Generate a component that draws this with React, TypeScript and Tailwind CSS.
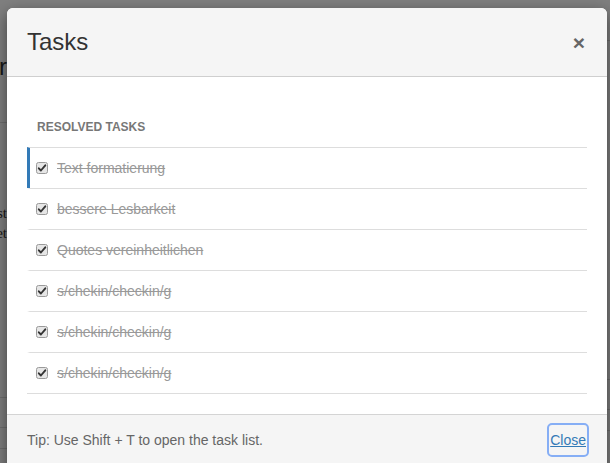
const tasks = [
  "Text formatierung",
  "bessere Lesbarkeit",
  "Quotes vereinheitlichen",
  "s/chekin/checkin/g",
  "s/chekin/checkin/g",
  "s/chekin/checkin/g",
];

function CheckedBox() {
  return (
    <svg width="12" height="12" viewBox="0 0 12 12" className="shrink-0">
      <rect x="0.5" y="0.5" width="11" height="11" rx="2" fill="#e6e6e6" stroke="#9a9a9a" />
      <path d="M2.8 6.3 L4.9 8.5 L9.3 3.3" fill="none" stroke="#333" strokeWidth="1.9" strokeLinecap="round" strokeLinejoin="round" />
    </svg>
  );
}

export default function App() {
  return (
    <div className="relative h-[463px] w-[610px] overflow-hidden bg-white font-['Liberation_Sans',Arial,sans-serif] text-[#333]">
      {/* page behind the dialog */}
      <div className="flex h-full">
        <div className="w-[7px] shrink-0 overflow-hidden">
          <div className="flex h-[123px] justify-end border-b border-[#ddd] pt-[52px]">
            <span className="whitespace-nowrap text-[24px] leading-[30px]">Tasker</span>
          </div>
          <div className="flex flex-col items-end pt-[80px] font-['Liberation_Serif',serif] text-[15px] leading-[20px]">
            <span className="whitespace-nowrap">ist</span>
            <span className="whitespace-nowrap">tet</span>
          </div>
          <div className="mt-[125px] h-[30px] border-b border-[#ddd]" />
          <div className="h-[30px] border-b border-[#ddd]" />
          <div className="h-[21px] border-b border-[#ddd]" />
        </div>
        <div className="flex-1" />
        <div className="w-[3px] shrink-0">
          <div className="h-[41px] border-b border-[#ddd]" />
          <div className="h-[339px] border-b border-[#ddd]" />
          <div className="h-[30px] border-b border-[#ddd]" />
          <div className="h-[21px] border-b border-[#ddd]" />
        </div>
      </div>

      {/* overlay + dialog */}
      <div className="absolute inset-0 bg-black/50 pl-[7px] pt-[8px]">
        <div className="w-[600px] overflow-hidden rounded-t-[6px] bg-white shadow-[0_5px_15px_rgba(0,0,0,0.5)]">
          <div className="flex h-[69px] items-center justify-between border-b border-[#cfcfcf] bg-[#f5f5f5] px-[20px]">
            <h4 className="text-[24px] leading-[30px] text-[#333]">Tasks</h4>
            <button className="mr-[2px] text-[21px] font-bold leading-none text-[#666]">×</button>
          </div>

          <div className="px-[20px] pb-[20px] pt-[42px]">
            <h5 className="mb-[11px] pl-[10px] text-[12px] font-bold leading-[17px] text-[#777]">RESOLVED TASKS</h5>
            <ul className="border-b border-[#ddd]">
              {tasks.map((t, i) => (
                <li
                  key={i}
                  className={`flex h-[41px] items-center gap-[9px] border-l-[3px] border-t border-t-[#ddd] pl-[6px] ${
                    i === 0 ? "border-l-[#337ab7]" : "border-l-transparent"
                  }`}
                >
                  <CheckedBox />
                  <span className="text-[14px] leading-none text-[#999] line-through">{t}</span>
                </li>
              ))}
            </ul>
          </div>

          <div className="flex h-[60px] items-start justify-between border-t border-[#d4d4d4] bg-[#f5f5f5] px-[20px] pt-[10px]">
            <p className="text-[14px] leading-[30px] text-[#666]">Tip: Use Shift + T to open the task list.</p>
            <button className="h-[30px] rounded-[3px] px-[1px] text-[14px] text-[#337ab7] underline outline-2 outline-[#86aef5]">
              Close
            </button>
          </div>
        </div>
      </div>
    </div>
  );
}
